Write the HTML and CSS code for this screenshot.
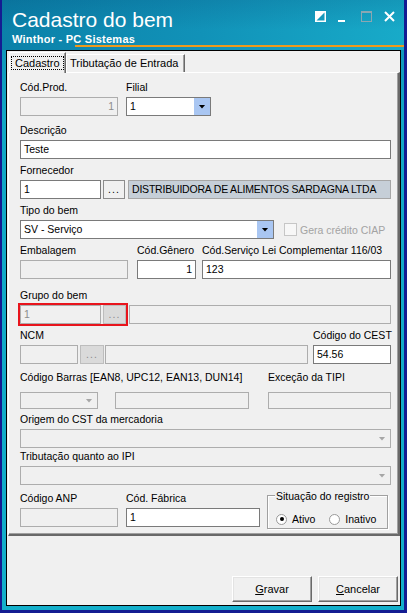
FILE: index.html
```html
<!DOCTYPE html>
<html lang="pt-BR">
<head>
  <meta charset="UTF-8" />
  <title>Cadastro do bem</title>
  <link rel="stylesheet" href="styles.css">
</head>
<body>
<div class="window">

  <!-- barra de título -->
  <div class="titlebar">
    <div class="title-head">
      <div class="title-text">
        <div class="title">Cadastro do bem</div>
        <div class="subtitle">Winthor - PC Sistemas</div>
      </div>
      <div class="controls">
        <svg width="11" height="11" viewBox="0 0 11 11">
          <rect x="0.75" y="0.75" width="9.5" height="9.5" fill="none" stroke="#fff" stroke-width="1.5"/>
          <polygon points="0,0 11,0 0,11" fill="#fff"/>
        </svg>
        <svg width="11" height="11" viewBox="0 0 11 11">
          <rect x="0" y="9" width="7" height="2" fill="#fff"/>
        </svg>
        <svg width="11" height="11" viewBox="0 0 11 11">
          <rect x="0.5" y="0.5" width="10" height="10" fill="none" stroke="#8aa7b2"/>
          <rect x="0" y="0" width="11" height="2" fill="#8aa7b2"/>
        </svg>
        <svg width="11" height="11" viewBox="0 0 11 11">
          <path d="M1 1 L10 10 M10 1 L1 10" stroke="#fff" stroke-width="2"/>
        </svg>
      </div>
    </div>
    <div class="accent"></div>
  </div>

  <div class="client">
    <!-- abas -->
    <div class="tabs">
      <div class="tab active"><span class="focus">Cadastro</span></div>
      <div class="tab">Tributação de Entrada</div>
    </div>

    <div class="page">
      <div class="row r1">
        <div class="field f-cod">
          <label>Cód.Prod.</label>
          <div class="edit off num">1</div>
        </div>
        <div class="field f-filial">
          <label>Filial</label>
          <div class="combo"><span class="val">1</span><span class="drop"></span></div>
        </div>
      </div>

      <div class="row r2">
        <div class="field f-full">
          <label>Descrição</label>
          <div class="edit">Teste</div>
        </div>
      </div>

      <div class="row r3">
        <div class="field f-full">
          <label>Fornecedor</label>
          <div class="line">
            <div class="edit w81">1</div>
            <div class="dots w22">...</div>
            <div class="edit info desc">DISTRIBUIDORA DE ALIMENTOS SARDAGNA LTDA</div>
          </div>
        </div>
      </div>

      <div class="row r4">
        <div class="field f-full">
          <label>Tipo do bem</label>
          <div class="line">
            <div class="combo w254"><span class="val">SV - Serviço</span><span class="drop"></span></div>
            <div class="check"><span class="box"></span>Gera crédito CIAP</div>
          </div>
        </div>
      </div>

      <div class="row r5">
        <div class="field f-emb">
          <label>Embalagem</label>
          <div class="edit off"></div>
        </div>
        <div class="field f-gen">
          <label>Cód.Gênero</label>
          <div class="edit num">1</div>
        </div>
        <div class="field f-serv">
          <label>Cód.Serviço Lei Complementar 116/03</label>
          <div class="edit">123</div>
        </div>
      </div>

      <div class="row r6">
        <div class="field f-full">
          <label>Grupo do bem</label>
          <div class="line">
            <div class="mark">
              <div class="edit off w81">1</div>
              <div class="dots off w23">...</div>
            </div>
            <div class="edit off desc"></div>
          </div>
        </div>
      </div>

      <div class="row r7">
        <div class="field f-ncm">
          <label>NCM</label>
          <div class="line">
            <div class="edit off w58"></div>
            <div class="dots off w24">...</div>
            <div class="edit off desc tight"></div>
          </div>
        </div>
        <div class="field f-cest">
          <label>Código do CEST</label>
          <div class="edit">54.56</div>
        </div>
      </div>

      <div class="row r8">
        <div class="field f-barras">
          <label>Código Barras [EAN8, UPC12, EAN13, DUN14]</label>
          <div class="line">
            <div class="combo off w78"><span class="val"></span><span class="drop"></span></div>
            <div class="edit off w134"></div>
          </div>
        </div>
        <div class="field f-tipi">
          <label>Exceção da TIPI</label>
          <div class="edit off"></div>
        </div>
      </div>

      <div class="row r9">
        <div class="field f-full">
          <label>Origem do CST da mercadoria</label>
          <div class="combo off"><span class="val"></span><span class="drop"></span></div>
        </div>
      </div>

      <div class="row r10">
        <div class="field f-full">
          <label>Tributação quanto ao IPI</label>
          <div class="combo off"><span class="val"></span><span class="drop"></span></div>
        </div>
      </div>

      <div class="row r11">
        <div class="field f-anp">
          <label>Código ANP</label>
          <div class="edit off"></div>
        </div>
        <div class="field f-fab">
          <label>Cód. Fábrica</label>
          <div class="edit">1</div>
        </div>
        <div class="groupbox">
          <span class="legend">Situação do registro</span>
          <div class="radios">
            <div class="opt"><span class="radio on"></span>Ativo</div>
            <div class="opt"><span class="radio"></span>Inativo</div>
          </div>
        </div>
      </div>
    </div>

    <!-- botões -->
    <div class="actions">
      <button class="btn"><u>G</u>ravar</button>
      <button class="btn"><u>C</u>ancelar</button>
    </div>
  </div>
</div>
</body>
</html>
```

FILE: styles.css
```css
* { box-sizing: border-box; }
body {
  margin: 0;
  font-family: "Liberation Sans", Arial, sans-serif;
  font-size: 10.5px;
  color: #000;
  background: #141c92;
}

/* moldura da janela */
.window {
  width: 407px;
  height: 613px;
  display: flex;
  flex-direction: column;
  border: solid #141c92;
  border-width: 0 3px 3px 2px;
  background: linear-gradient(to bottom, #0c8cb2 0, #14a8c6 120px, #14afcb 100%);
}
.titlebar {
  height: 50px;
  color: #fff;
  background:
    linear-gradient(to bottom, rgba(0, 40, 90, .14), rgba(0, 40, 90, 0) 30px),
    linear-gradient(100deg, #0b80a8 0%, #1192b8 50%, #18abc9 100%);
}
.title-head {
  height: 45px;
  display: flex;
}
.title-text {
  flex: 1;
  padding: 8px 0 0 10px;
}
.title {
  font-size: 21px;
  line-height: 24px;
}
.subtitle {
  margin-top: 1px;
  font-weight: bold;
  font-size: 11px;
  line-height: 12px;
  letter-spacing: .25px;
}
.controls {
  display: flex;
  gap: 12px;
  padding: 11px 9px 0 0;
}
.controls svg { display: block; }
.accent {
  height: 2px;
  margin-left: 73px;
  background: #ee9a1c;
}

/* área cliente */
.client {
  flex: 1;
  margin: 0 3px 4px 4px;
  border: 1px solid #000;
  background: #f0f0f0;
  display: flex;
  flex-direction: column;
}
.tabs {
  display: flex;
  align-items: flex-end;
  height: 21px;
  padding-left: 2px;
  font-size: 11px;
}
.tab {
  width: 119px;
  height: 18px;
  padding: 0 0 0 3px;
  line-height: 16px;
  border: 1px solid;
  border-color: #fff #696969 transparent #fff;
  border-bottom: 0;
  box-shadow: inset -1px 0 #a0a0a0;
  white-space: nowrap;
}
.tab.active {
  width: 57px;
  height: 21px;
  margin-bottom: -1px;
  padding: 2px 0 0 1px;
  background: #f0f0f0;
  position: relative;
  z-index: 1;
}
.focus {
  display: inline-block;
  height: 14px;
  line-height: 12px;
  padding: 0 3px;
  border: 1px dotted #000;
}
.page {
  height: 464px;
  margin-left: 1px;
  padding: 0 7px 0 11px;
  border-top: 1px solid #fff;
  border-left: 1px solid #fff;
  border-right: 2px solid #696969;
  border-bottom: 2px solid #696969;
  box-shadow: inset -1px -1px #a0a0a0;
}

/* linhas do formulário */
.row { display: flex; margin-top: 5px; }
.r1, .r2 { margin-top: 8px; }
.r6 { margin-top: 10px; }
.r8 { margin-top: 7px; }
.r9 { margin-top: 4px; }
.r10 { margin-top: 2px; }
.r11 { margin-top: 7px; }

.field label {
  display: block;
  height: 13px;
  line-height: 13px;
  margin-bottom: 3px;
  white-space: nowrap;
}
.r8 .field label { margin-bottom: 8px; }

.f-full { flex: 1; }
.f-cod { width: 98px; }
.f-filial { width: 85px; margin-left: 8px; }
.f-emb { width: 108px; }
.f-gen { width: 59px; margin-left: 9px; }
.f-serv { flex: 1; margin-left: 6px; }
.f-ncm { flex: 1; }
.f-cest { width: 78px; margin-left: 5px; }
.f-barras { flex: 1; }
.f-tipi { width: 123px; margin-left: 19px; }
.f-anp { width: 98px; }
.f-fab { width: 134px; margin-left: 8px; }

.line { display: flex; align-items: center; }
.w22 { width: 22px; }
.w23 { width: 23px; }
.w24 { width: 24px; }
.w58 { width: 58px; }
.w78 { width: 78px; }
.w81 { width: 81px; }
.w134 { width: 134px; margin-left: 17px; }
.w254 { width: 254px; }
.dots { margin-left: 2px; }
.desc { flex: 1; min-width: 0; margin-left: 3px; }
.desc.tight { margin-left: 1px; }

/* caixas de texto */
.edit {
  height: 19px;
  padding: 0 3px;
  line-height: 17px;
  border: 1px solid #7a7a7a;
  background: #fff;
  white-space: nowrap;
  overflow: hidden;
}
.edit.off {
  border-color: #adadad;
  background: #f0f0f0;
  color: #8c8c8c;
}
.edit.num { text-align: right; }
.edit.info {
  background: #c6cfd8;
  border-color: #a6a6a6;
  letter-spacing: -.2px;
}
.r8 .edit, .r8 .combo { height: 17px; }

.dots {
  height: 19px;
  border: 1px solid #8c8c8c;
  background: #f0f0f0;
  text-align: center;
  line-height: 17px;
  letter-spacing: 1px;
  flex-shrink: 0;
}
.dots.off {
  border-color: #bdbdbd;
  background: #dadada;
  color: #8c8c8c;
}
.mark {
  display: flex;
  outline: 2px solid #e8141c;
}

/* combos */
.combo {
  height: 19px;
  display: flex;
  border: 1px solid #7a7a7a;
  background: #fff;
}
.combo .val {
  flex: 1;
  padding-left: 3px;
  line-height: 17px;
}
.combo .drop {
  width: 16px;
  background: #a9c6f2;
  display: flex;
  align-items: center;
  justify-content: center;
}
.combo .drop::after {
  content: "";
  width: 7px;
  height: 4px;
  background: #000;
  clip-path: polygon(0 0, 100% 0, 50% 100%);
}
.combo.off {
  border-color: #adadad;
  background: #f0f0f0;
}
.combo.off .drop { background: none; }
.combo.off .drop::after { background: #a6a6a6; }

.check {
  display: flex;
  align-items: center;
  margin-left: 10px;
  color: #a3a3a3;
}
.check .box {
  width: 13px;
  height: 13px;
  margin-right: 3px;
  border: 1px solid #c6c6c6;
  background: #f7f7f7;
}

/* situação do registro */
.groupbox {
  width: 121px;
  height: 34px;
  margin: 3px 0 0 7px;
  padding-left: 8px;
  border: 1px solid #a0a0a0;
  box-shadow: 1px 1px 0 #fff, inset 1px 1px 0 #fff;
}
.legend {
  display: inline-block;
  margin: -6px 0 0 -1px;
  padding: 0 1px;
  line-height: 13px;
  background: #f0f0f0;
  vertical-align: top;
}
.radios {
  display: flex;
  align-items: center;
  height: 14px;
  margin-top: 4px;
}
.opt {
  display: flex;
  align-items: center;
  gap: 5px;
}
.opt + .opt { margin-left: 14px; }
.radio {
  width: 11px;
  height: 11px;
  border-radius: 50%;
  border: 1px solid #9a9a9a;
  background: #fff;
  display: flex;
  align-items: center;
  justify-content: center;
}
.radio.on::after {
  content: "";
  width: 4px;
  height: 4px;
  border-radius: 50%;
  background: #000;
}

/* botões */
.actions {
  display: flex;
  justify-content: flex-end;
  gap: 6px;
  margin-top: 40px;
  padding-right: 2px;
}
.btn {
  width: 80px;
  height: 26px;
  font: inherit;
  font-size: 11px;
  color: #000;
  background: #f0f0f0;
  border: 1px solid;
  border-color: #fff #696969 #696969 #fff;
  box-shadow: inset -1px -1px #a0a0a0, inset 1px 1px #e3e3e3;
  padding: 0;
}
```
